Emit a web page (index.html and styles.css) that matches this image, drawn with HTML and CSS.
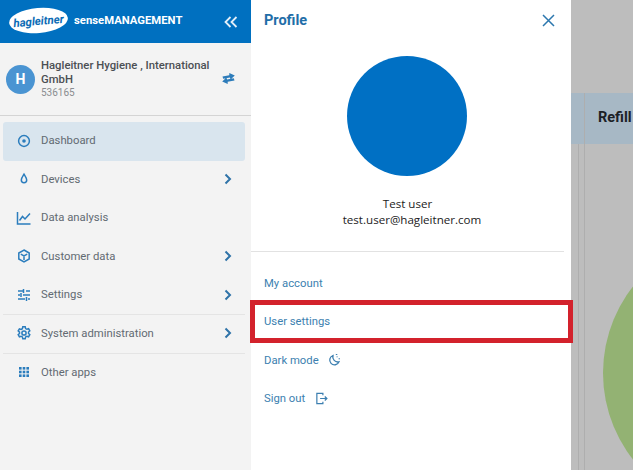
FILE: index.html
```html
<!DOCTYPE html>
<html lang="en">
<head>
    <meta charset="UTF-8">
    <title>senseMANAGEMENT</title>
    <link rel="stylesheet" href="styles.css">
</head>
<body>
<div class="page">
    <aside class="sidebar">
        <div class="brand">
            <span class="logo">hagleitner</span>
            <span class="brand-name">senseMANAGEMENT</span>
            <svg class="collapse" width="14" height="14" viewBox="0 0 14 14"><path d="M6.5 2 1.5 7l5 5M12.5 2l-5 5 5 5"/></svg>
        </div>
        <div class="account">
            <span class="account-badge">H</span>
            <div class="account-text">
                <div class="account-name">Hagleitner Hygiene , International GmbH</div>
                <div class="account-id">536165</div>
            </div>
            <svg class="swap" width="13" height="12" viewBox="0 0 13 12"><path d="M.5 3.500 7.300 2.300V0L12.800 2.600 8.500 6.500 7.900 4.500 1.200 5.800zM12.500 7.500 5.700 8.700V11L.2 8.400 4.500 4.500 5.100 6.500 11.800 5.200z"/></svg>
        </div>
        <nav class="menu">
            <a class="menu-item active">
                <svg class="icon" viewBox="0 0 16 16"><circle cx="8" cy="8" r="5.400"/><circle class="solid" cx="8" cy="8" r="1.800"/></svg>
                <span class="menu-label">Dashboard</span>
            </a>
            <a class="menu-item">
                <svg class="icon" viewBox="0 0 16 16"><path d="M8 3.200C6.600 5.400 5.300 6.900 5.300 9a2.700 2.700 0 0 0 5.400 0C10.700 6.900 9.400 5.400 8 3.200z"/></svg>
                <span class="menu-label">Devices</span>
                <svg class="chevron" width="8" height="12" viewBox="0 0 8 12"><path d="M1.500 1.500 6 6l-4.500 4.500"/></svg>
            </a>
            <a class="menu-item">
                <svg class="icon" viewBox="0 0 16 16"><path d="M1.500 2v12h13M3.500 10.500 6.500 6.500 9 9l5-5.500"/></svg>
                <span class="menu-label">Data analysis</span>
            </a>
            <a class="menu-item">
                <svg class="icon" viewBox="0 0 16 16"><path d="M8 2 13.200 5v6L8 14l-5.200-3V5zM4.800 6.200 8 8l3.200-1.800M8 8v4"/></svg>
                <span class="menu-label">Customer data</span>
                <svg class="chevron" width="8" height="12" viewBox="0 0 8 12"><path d="M1.500 1.500 6 6l-4.500 4.500"/></svg>
            </a>
            <a class="menu-item divided">
                <svg class="icon" viewBox="0 0 16 16"><path d="M2 4h5M10 4h4M7.500 2v4M2 8h2M7 8h7M5 6v4M2 12h7M12 12h2M10.500 10v4"/></svg>
                <span class="menu-label">Settings</span>
                <svg class="chevron" width="8" height="12" viewBox="0 0 8 12"><path d="M1.500 1.500 6 6l-4.500 4.500"/></svg>
            </a>
            <a class="menu-item divided">
                <svg class="icon" viewBox="0 0 16 16"><path d="M6.800 1.800h2.400l.4 1.800 1.300.7 1.700-.6 1.200 2.100-1.300 1.200v1.500l1.300 1.200-1.200 2.100-1.700-.6-1.300.7-.4 1.800H6.800l-.4-1.800-1.300-.7-1.700.6-1.200-2.100 1.300-1.200V7.100L2.200 5.900l1.200-2.100 1.700.6 1.300-.7z"/><circle cx="8" cy="8" r="2.100"/></svg>
                <span class="menu-label">System administration</span>
                <svg class="chevron" width="8" height="12" viewBox="0 0 8 12"><path d="M1.500 1.500 6 6l-4.500 4.500"/></svg>
            </a>
            <a class="menu-item">
                <svg class="icon" viewBox="0 0 16 16"><g class="solid"><rect x="3" y="3" width="2.600" height="2.600"/><rect x="6.700" y="3" width="2.600" height="2.600"/><rect x="10.400" y="3" width="2.600" height="2.600"/><rect x="3" y="6.700" width="2.600" height="2.600"/><rect x="6.700" y="6.700" width="2.600" height="2.600"/><rect x="10.400" y="6.700" width="2.600" height="2.600"/><rect x="3" y="10.400" width="2.600" height="2.600"/><rect x="6.700" y="10.400" width="2.600" height="2.600"/><rect x="10.400" y="10.400" width="2.600" height="2.600"/></g></svg>
                <span class="menu-label">Other apps</span>
            </a>
        </nav>
    </aside>

    <section class="profile">
        <div class="profile-head">
            <h2>Profile</h2>
            <svg class="close" width="13" height="13" viewBox="0 0 13 13"><path d="M1 1l11 11M12 1 1 12"/></svg>
        </div>
        <div class="avatar"></div>
        <div class="user">
            <div>Test user</div>
            <div class="user-mail">test.user@hagleitner.com</div>
        </div>
        <ul class="links">
            <li>My account</li>
            <li class="marked">User settings<span class="red-box"></span></li>
            <li>Dark mode
                <svg class="link-icon moon" width="14" height="14" viewBox="0 0 14 14"><path d="M6 2.500a4.800 4.800 0 1 0 6 6.300A5 5 0 0 1 6 2.500z"/><path class="dots" d="M8.800 1.500h1.500M9.600 3.800h1M12.200 5v1.400"/></svg>
            </li>
            <li>Sign out
                <svg class="link-icon" width="13" height="13" viewBox="0 0 14 14"><path d="M8.500 3.500V1.500H2v11h6.500v-2M5.500 7h7M10.500 4.800 12.800 7l-2.300 2.200"/></svg>
            </li>
        </ul>
    </section>

    <div class="backdrop">
        <div class="card card-left"><div class="card-head"></div></div>
        <div class="card card-right">
            <div class="card-head">Refill</div>
            <div class="chart"></div>
        </div>
    </div>
</div>
</body>
</html>
```

FILE: styles.css
```css
* {
    box-sizing: border-box;
}
html, body {
    margin: 0;
    height: 100%;
    overflow: hidden;
}
body {
    font-family: Roboto, "Liberation Sans", sans-serif;
}
.page {
    display: flex;
    width: 633px;
    height: 470px;
}

/* left menu */
.sidebar {
    width: 251px;
    flex: none;
    background: #f3f3f3;
}
.brand {
    display: flex;
    align-items: center;
    height: 43px;
    padding: 0 13px 0 9px;
    background: #0070c0;
    color: #fff;
}
.logo {
    display: flex;
    align-items: center;
    justify-content: center;
    width: 59px;
    height: 25px;
    margin-top: -3px;
    border-radius: 50%;
    background: #fff;
    color: #0d6cb5;
    font-size: 11.500px;
    font-style: italic;
    font-weight: 700;
    transform: rotate(-5deg);
}
.brand-name {
    margin-left: 6px;
    flex: 1;
    margin-top: -3px;
    font-size: 11.300px;
    font-weight: 700;
}
.collapse {
    fill: none;
    stroke: #e4eff8;
    stroke-width: 1.800;
}
.account {
    display: flex;
    align-items: center;
    height: 73px;
    padding: 0 16px 0 6px;
    border-bottom: 1px solid #d4d4d4;
}
.account-badge {
    display: flex;
    align-items: center;
    justify-content: center;
    width: 29px;
    height: 29px;
    flex: none;
    border-radius: 50%;
    background: #4a94d2;
    color: #fff;
    font-size: 14px;
    font-weight: 700;
}
.account-text {
    flex: 1;
    margin: 1px 12px 0 6px;
    font-size: 11.300px;
    line-height: 13.500px;
}
.account-name {
    color: #4b4f54;
    font-weight: 500;
}
.account-id {
    color: #8a8d90;
    font-size: 10px;
}
.swap {
    fill: #2d7cba;
}
.menu {
    display: flex;
    flex-direction: column;
    padding: 6px 6px 0 3px;
}
.menu-item {
    display: flex;
    align-items: center;
    height: 38.600px;
    padding: 0 13px 2px 13px;
    color: #626a72;
    font-size: 11.300px;
}
.menu-item.active {
    height: 39px;
    background: #d9e5ee;
    border-radius: 3px;
}
.menu-item.divided {
    border-bottom: 1px solid #e4e4e4;
}
.menu-label {
    flex: 1;
    margin-left: 9px;
}
.icon {
    width: 16px;
    height: 16px;
    flex: none;
    fill: none;
    stroke: #2b7dbd;
    stroke-width: 1.500;
}
.icon .solid {
    fill: #2b7dbd;
    stroke: none;
}
.chevron {
    fill: none;
    stroke: #2f73a8;
    stroke-width: 2;
}

/* profile panel */
.profile {
    width: 320px;
    flex: none;
    display: flex;
    flex-direction: column;
    background: #fff;
}
.profile-head {
    display: flex;
    align-items: center;
    justify-content: space-between;
    height: 41px;
    padding: 0 16px 0 13px;
}
.profile-head h2 {
    margin: 0;
    color: #1f6ea8;
    font-size: 14.500px;
    font-weight: 700;
}
.close {
    fill: none;
    stroke: #2c77ae;
    stroke-width: 1.500;
}
.avatar {
    width: 120px;
    height: 120px;
    margin: 15px 0 0 96px;
    border-radius: 50%;
    background: #0070c4;
}
.user {
    margin: 20px 7px 0 0;
    padding-bottom: 23px;
    border-bottom: 1px solid #e2e2e2;
    color: #222;
    font-family: "Open Sans", sans-serif;
    font-size: 11.600px;
    line-height: 16px;
    text-align: center;
}
.user-mail {
    padding-left: 9px;
}
.links {
    list-style: none;
    margin: 12px 0 0;
    padding: 0;
    color: #3c7fb0;
    font-size: 11.300px;
}
.links li {
    display: flex;
    align-items: center;
    height: 38.500px;
    padding-left: 13px;
}
.marked {
    position: relative;
}
.red-box {
    position: absolute;
    left: -1px;
    right: -2px;
    top: -3px;
    bottom: -2px;
    border: 5px solid #d3222c;
}
.link-icon {
    margin-left: 10px;
    fill: none;
    stroke: #3c7fb0;
    stroke-width: 1.300;
}
.link-icon.moon {
    margin-left: 8px;
}
.link-icon .dots {
    stroke-width: 1;
}

/* page behind the panel, dimmed */
.backdrop {
    flex: 1;
    display: flex;
    gap: 5px;
    min-width: 0;
    padding-top: 93px;
    background: #bdbdbd;
    overflow: hidden;
}
.card {
    position: relative;
}
.card-left {
    width: 8px;
    flex: none;
    border-right: 1px solid #aeaeae;
}
.card-right {
    flex: 1;
    min-width: 0;
    border-left: 1px solid #aeaeae;
}
.card-head {
    height: 51px;
    padding: 16px 0 0 13px;
    background: #a7b8c5;
    color: #1c2126;
    font-size: 14.500px;
    font-weight: 700;
}
.chart {
    position: absolute;
    left: 18px;
    top: 140px;
    width: 280px;
    height: 280px;
    border-radius: 50%;
    background: #93b273;
}
```
